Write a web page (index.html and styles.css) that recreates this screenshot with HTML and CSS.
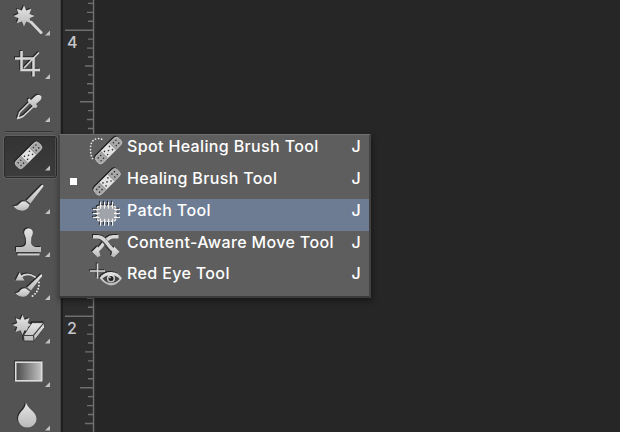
FILE: index.html
```html
<!DOCTYPE html>
<html lang="en">
<head>
<meta charset="utf-8">
<title>Healing tools</title>
<link rel="stylesheet" href="styles.css">
</head>
<body>
<svg class="defs" width="0" height="0" aria-hidden="true">
  <defs>
    <linearGradient id="metal" x1="0" y1="0" x2="0" y2="1"><stop offset="0" stop-color="#e6e6e6"/><stop offset="1" stop-color="#b9b9b9"/></linearGradient>
    <linearGradient id="ramp"><stop offset="0" stop-color="#4a4a4a"/><stop offset="1" stop-color="#c4c4c4"/></linearGradient>
    <g id="bandage">
      <rect x="-16" y="-4.800" width="32" height="9.600" rx="3.600" fill="#a8a8a8" stroke="#c4c4c4" stroke-width=".8"/>
      <rect x="-6" y="-4.800" width="12" height="9.600" fill="#e2e2e2"/>
      <path d="M-6-4.800V4.800M6-4.800V4.800" stroke="#777" stroke-width=".7"/>
      <g fill="#333"><circle cx="-12.500" cy="-2" r=".8"/><circle cx="-12.500" cy="2" r=".8"/><circle cx="-9" cy="-2" r=".8"/><circle cx="-9" cy="2" r=".8"/><circle cx="-3.500" cy="-2.200" r=".8"/><circle cx="-3.500" cy="2.200" r=".8"/><circle cx="0" cy="0" r=".8"/><circle cx="3.500" cy="-2.200" r=".8"/><circle cx="3.500" cy="2.200" r=".8"/><circle cx="9" cy="-2" r=".8"/><circle cx="9" cy="2" r=".8"/><circle cx="12.500" cy="-2" r=".8"/><circle cx="12.500" cy="2" r=".8"/></g>
    </g>
    <path id="burst" d="M0-10.500 2.200-5.500 7.300-7.300 5.500-2.200 10.500 0 5.500 2.200 7.300 7.300 2.200 5.500 0 10.500-2.200 5.500-7.300 7.300-5.500 2.200-10.500 0-5.500-2.200-7.300-7.300-2.200-5.500Z"/>
  </defs>
</svg>
<div class="app">
  <nav class="toolbar">
    <button class="tool"><svg viewBox="0 0 60 43"><g class="glyph"><use href="#burst" x="24" y="16"/><path class="line" d="M31 22 41 32.500" stroke-width="3"/></g><path class="more" d="M50 30.500V35.500H45Z"/></svg></button>
    <button class="tool"><svg viewBox="0 43 60 43"><g class="glyph"><path class="line butt" d="M15 58.500H33.500V76.500M21.500 51V70H40" stroke-width="2.500"/><path class="line butt" d="M24 68 39 52.500" stroke-width="1.500"/></g><path class="more" d="M50 74V79H45Z"/></svg></button>
    <button class="tool tall"><svg viewBox="0 86 60 44"><g class="glyph"><path d="M31 100 36 95.500Q39.500 93.500 41.300 96.300 42 99 39.500 101L36 104 37.500 106Q36.500 109 34 107.500L28 101.500Q27 99 29.500 98.500Z"/><path class="line" d="M29.500 102.500 19.500 112.500Q19 115.500 17.500 118.500 21 117.500 23.500 116L33.500 106.500" stroke-width="1.500"/></g><path class="more" d="M50 117V122H45Z"/></svg></button>
    <div class="divider"></div>
    <button class="tool selected"><svg viewBox="0 134 60 43"><g class="glyph"><use href="#bandage" transform="translate(28.500 155.300) rotate(-45)"/></g><path class="more" d="M50 165.500V170.500H45Z"/></svg></button>
    <button class="tool"><svg viewBox="0 177 60 43"><g class="glyph"><path d="M42 184.800Q43.800 184.800 43.300 186.500L30.500 203.500 26.500 200.500Z"/><path d="M25.500 201.500 29.500 204.700Q28.500 209.500 22.500 210.700 16.500 210.500 13.300 206 17.500 206.500 19.500 203.500 22 200.500 25.500 201.500Z"/></g><path class="more" d="M50 209V214H45Z"/></svg></button>
    <button class="tool"><svg viewBox="0 220 60 43"><g class="glyph"><path d="M28.500 228.200A4.500 4.500 0 0 1 32.800 233.500Q30.500 238 31 243 32 246.500 36 247H41V252H16V247H21.500Q25.500 246.500 26 243 26.500 238 24.200 233.500A4.500 4.500 0 0 1 28.500 228.200Z"/><path d="M17.500 253.500H39.500V255.500H17.500Z"/></g><path class="more" d="M50 252V257H45Z"/></svg></button>
    <button class="tool"><svg viewBox="0 263 60 43"><g class="glyph"><path d="M41 274.300Q42.500 274.500 42 276.300L31 290.500 27 287.500Z"/><path d="M26 288.500 30 291.500Q28.500 295.500 24 296.800 18.500 297 15.500 293 19 293 20.500 290 23 287.500 26 288.500Z"/><path class="line" d="M20 277.500Q27 271.500 35 277" stroke-width="1.800"/><path d="M15.500 280.500 19.500 272.500 24.500 280.500Z"/></g><path class="line dots" d="M39 282.500Q39.500 291 32.500 296" stroke-width="1.900"/><path class="more" d="M50 295V300H45Z"/></svg></button>
    <button class="tool tall"><svg viewBox="0 306 60 44"><g class="glyph"><use href="#burst" transform="translate(22.500 325) scale(.95)"/><path d="M32 322.700H44L44.500 327.500 34 341H24L23.500 335.500Z" stroke="#333" stroke-width=".8"/><path d="M24 335.500H33.500L44 322.700M33.500 335.500 34 341" fill="none" stroke="#444" stroke-width="1.200"/></g><path class="more" d="M50 338.500V343.500H45Z"/></svg></button>
    <button class="tool"><svg viewBox="0 350 60 43"><g class="glyph"><rect x="15.700" y="362.200" width="26" height="18.600" style="fill:url(#ramp)" stroke="#ddd" stroke-width="1.600"/></g><path class="more" d="M50 382V387H45Z"/></svg></button>
    <button class="tool last"><svg viewBox="0 393 60 39"><g class="glyph"><path d="M25.700 402.300C28 409 36.500 412 36.500 419A9.200 8.500 0 0 1 18 419C18 412 26.500 409 25.700 402.300Z"/></g><path class="more" d="M50 425.500V430.500H45Z"/></svg></button>
  </nav>
  <aside class="ruler">
    <div class="numbers"><span>4</span><span>2</span></div>
    <svg class="ticks" viewBox="63 0 32 432"><path d="M93.500 0V432M65 30.200H94M65 316.200H94M80 101.700H94M80 387.700H94M85 66H94M85 351.900H94M85 423.500H94M87 12.400H94M87 48.100H94M87 83.800H94M87 119.500H94M87 298.300H94M87 334.100H94M87 369.800H94M87 405.600H94M88 3.400H94M88 21.300H94M88 39.100H94M88 57H94M88 74.900H94M88 92.800H94M88 110.600H94M88 128.500H94M88 307.300H94M88 325.100H94M88 343H94M88 360.900H94M88 378.800H94M88 396.600H94M88 414.500H94"/></svg>
  </aside>
  <main class="canvas"></main>
</div>
<ul class="menu">
  <li class="item"><span class="mark"></span><svg viewBox="88 135 39 31.600"><g class="glyph"><use href="#bandage" transform="translate(108.500 150.500) rotate(-45)"/></g><path class="line dots" d="M92.500 158.500Q90.500 155 90.500 149 90.500 139 98 138.500 102 138.500 104 141" stroke-width="1.700"/></svg><span class="name">Spot Healing Brush Tool</span><kbd>J</kbd></li>
  <li class="item"><span class="mark on"></span><svg viewBox="88 166.600 39 31.600"><g class="glyph"><use href="#bandage" transform="translate(107 181.500) rotate(-45)"/></g></svg><span class="name">Healing Brush Tool</span><kbd>J</kbd></li>
  <li class="item active"><span class="mark"></span><svg viewBox="88 198.200 39 31.600"><g class="glyph"><rect x="97" y="206" width="19" height="15.500" rx="3" style="fill:#a0a4aa" stroke="#f0f0f0" stroke-width="1.300" stroke-dasharray="2.500 1"/><path class="line butt" style="stroke:#f2f2f2" d="M100.500 202V209M104.500 202V209M108.500 202V209M112.500 202V209M100.500 219V226M104.500 219V226M108.500 219V226M112.500 219V226M93 209.500H99.500M93 213.500H99.500M93 217.500H99.500M114 209.500H120M114 213.500H120M114 217.500H120" stroke-width="1.200"/></g></svg><span class="name">Patch Tool</span><kbd>J</kbd></li>
  <li class="item"><span class="mark"></span><svg viewBox="88 229.800 39 31.600"><g class="glyph"><path class="line butt" d="M118.500 236.500H113C105 236.500 103 248 96 251" stroke-width="3.400"/><path class="line butt" style="stroke:#444" d="M101 237.500C106 240 108 248 113 250.500" stroke-width="5"/><path class="line butt" d="M93 236.500H98C106 236.500 108 248 115 251" stroke-width="3.400"/><path d="M92 251.500 97.500 246 100.500 255.500 97.500 257ZM119.500 251.500 114 246 111 255.500 114 257Z"/></g></svg><span class="name low">Content-Aware Move Tool</span><kbd class="low">J</kbd></li>
  <li class="item"><span class="mark"></span><svg viewBox="88 261.400 39 31.600"><g class="glyph"><path class="line butt" d="M90 271.500H105M97.500 264V279" stroke-width="1.500"/><path d="M99.500 278.500Q104 272.500 111 272.500T122 279Q117 285.800 111 285.800T99.500 278.500Z"/><path d="M102.500 279Q106 275.500 111 275.500T119.500 279.500Q116 283.500 111 283.500T102.500 279Z" style="fill:#454545"/><circle cx="111" cy="279" r="4"/><circle cx="111" cy="279" r="2.500" style="fill:#222"/><circle cx="110" cy="278" r=".8"/></g></svg><span class="name low">Red Eye Tool</span><kbd class="low">J</kbd></li>
</ul>
</body>
</html>
```
FILE: styles.css
```css
* { box-sizing: border-box; }
body { margin: 0; background: #262626; font-family: Inter, "Liberation Sans", sans-serif; overflow: hidden; }
.defs { position: absolute; }
.app { display: flex; width: 620px; height: 432px; }
.toolbar { width: 61px; flex: none; display: flex; flex-direction: column; background: #535353; border-right: 1px solid #454545; }
.tool { display: block; width: 60px; height: 43px; flex: none; padding: 0; border: 0; background: none; }
.tool.tall { height: 44px; }
.tool.last { height: 39px; }
.tool svg { display: block; width: 100%; height: 100%; overflow: visible; }
.tool.selected { background: linear-gradient(#333, #3c3c3c) 4px 2px / 51px 40px no-repeat; position: relative; }
.tool.selected::before { content: ""; position: absolute; left: 4px; top: 2px; width: 51px; height: 40px; border: 1px solid #2b2b2b; border-radius: 3px; box-shadow: 0 0 0 1px #606060; }
.tool.selected svg { position: relative; }
.divider { height: 4px; flex: none; margin: 0 7px 0 5px; background: linear-gradient(#535353 1px, #363636 1px, #363636 2px, #5e5e5e 2px, #5e5e5e 3px, #535353 3px); }
.glyph { fill: url(#metal); filter: drop-shadow(-.4px -1px .2px #252525); }
.line { fill: none; stroke: #d6d6d6; stroke-linecap: round; stroke-linejoin: round; }
.line.butt { stroke-linecap: butt; stroke-linejoin: miter; }
.line.dots { stroke: #eee; stroke-dasharray: 0 3.1; }
.more { fill: #c2c2c2; }
.ruler { width: 34px; flex: none; display: flex; background: #2d2d2d; border-left: 2px solid #1e1e1e; }
.numbers { width: 0; padding: 33px 0 0 4px; color: #c6c6cc; font-size: 16px; font-weight: 500; line-height: 18px; display: flex; flex-direction: column; gap: 268px; }
.ticks { width: 32px; height: 432px; flex: none; margin-left: -4px; fill: none; stroke: #6f6f6f; stroke-width: 1.400; }
.canvas { flex: 1; background: #262626; }
.menu { position: absolute; left: 58px; top: 134px; width: 313px; height: 164px; margin: 0; padding: 1px 0 0; list-style: none; background: #5e5e5e; border: 1px solid #3e3e3e; border-top-color: #707070; border-left: 2px solid #444; border-right: 2px solid #424242; border-bottom: 2px solid #3a3a3a; box-shadow: 1px 3px 6px rgba(0,0,0,.4); }
.item { display: flex; height: 31.600px; align-items: flex-start; color: #fff; font-size: 16px; font-weight: 500; letter-spacing: .36px; }
.item.active { background: #6d7c93; }
.item.active .name, .item.active kbd, .low { padding-top: 1px; }
.item svg { width: 39px; height: 31.600px; flex: none; margin: -1px 0 0 11px; }
.mark { width: 7px; height: 7px; margin: 10px 0 0 10px; flex: none; }
.mark.on { background: #fff; }
.name { flex: none; width: 224.500px; line-height: 21px; white-space: nowrap; }
kbd { font: inherit; line-height: 21px; }
```
